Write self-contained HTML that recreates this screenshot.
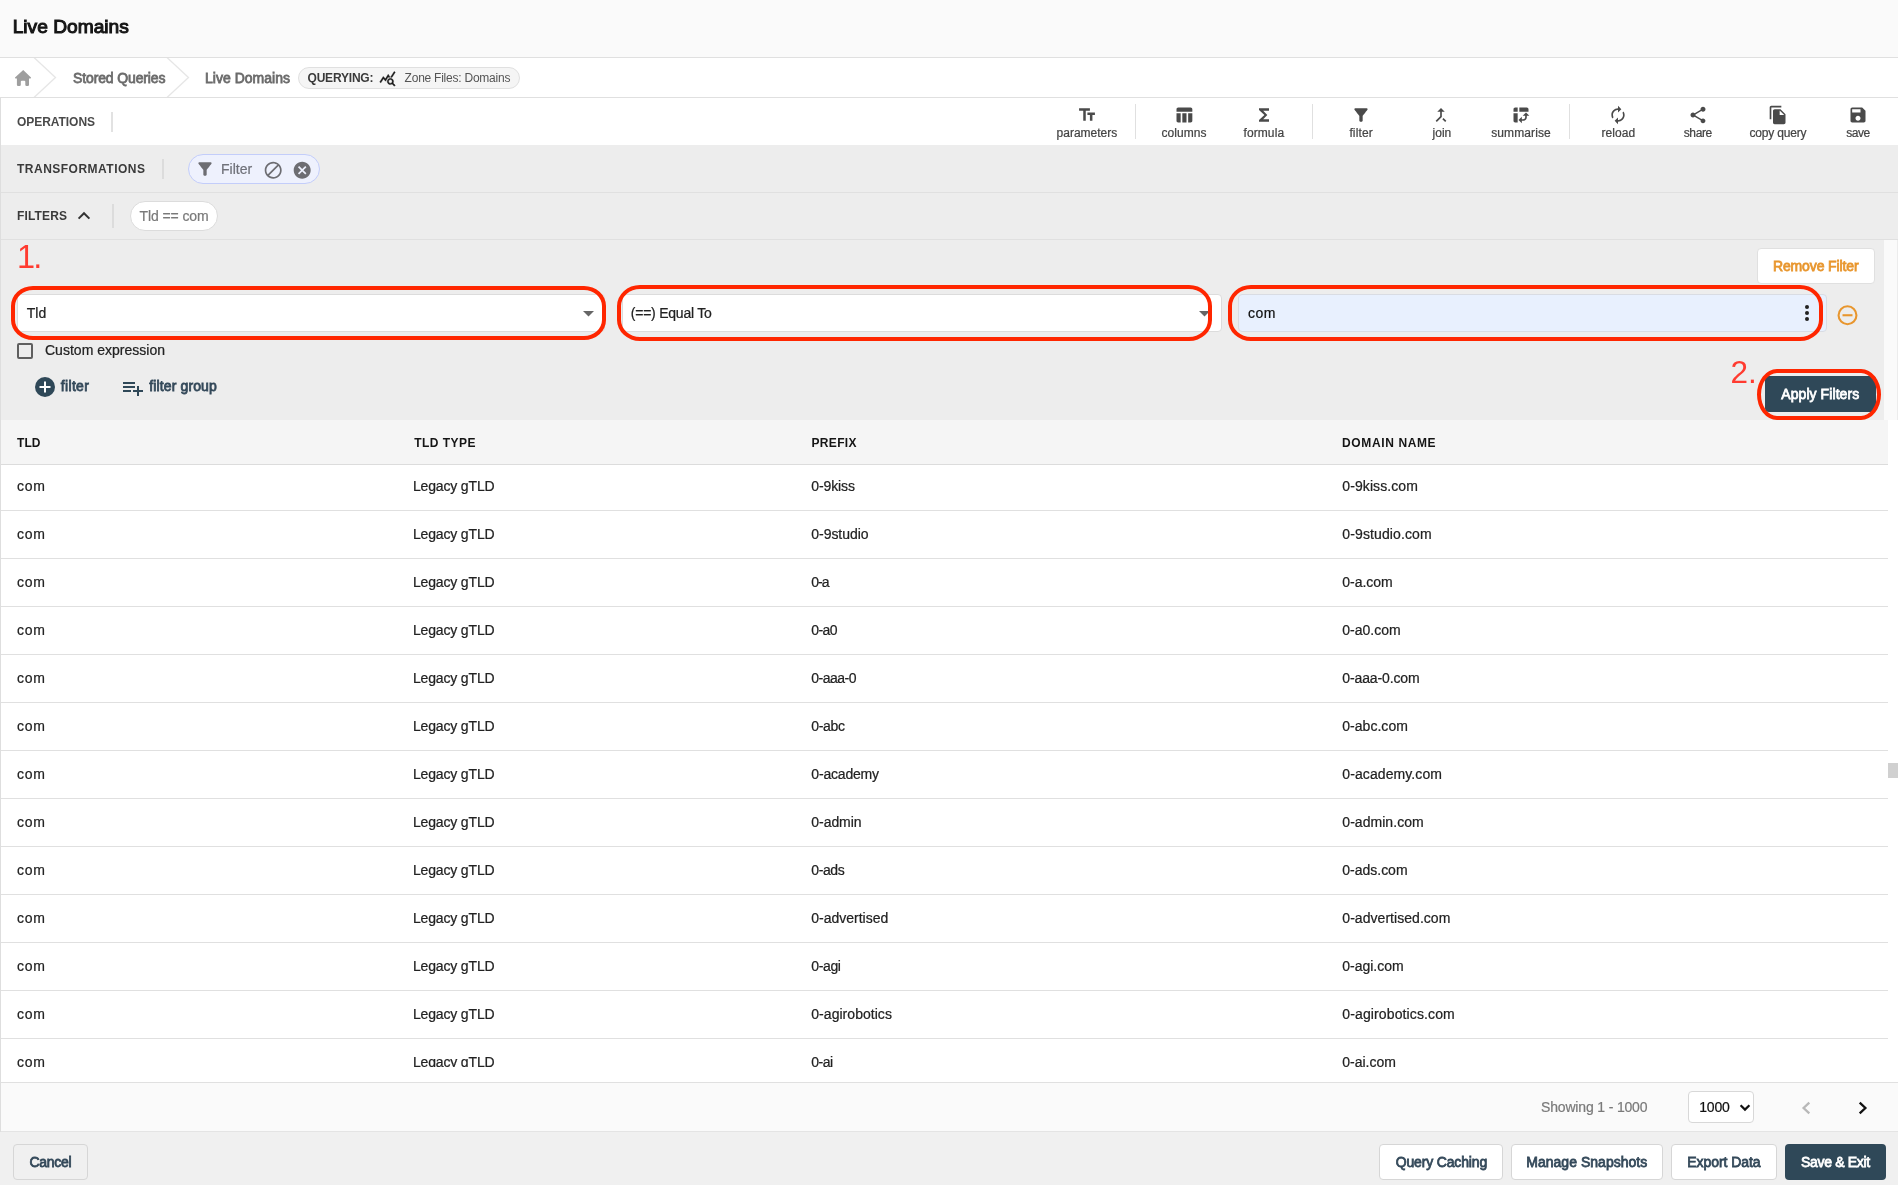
<!DOCTYPE html><html lang="en"><head><meta charset="utf-8"><title>Live Domains</title><style>
html,body{margin:0;padding:0;}body{width:1898px;height:1185px;position:relative;overflow:hidden;background:#fff;font-family:"Liberation Sans", sans-serif;}
.a{position:absolute;display:block;}.t{position:absolute;white-space:nowrap;line-height:20px;}
#tb{position:absolute;left:0;top:0;width:1898px;height:1067px;overflow:hidden;}
#w{position:absolute;left:0;top:0;width:1898px;height:1185px;will-change:transform;overflow:hidden;}
</style></head><body><div id="w">
<div class="a" style="left:0px;top:0px;width:1898px;height:57px;background:#fafafa;"></div>
<div class="a" style="left:0px;top:57px;width:1898px;height:1px;background:#e0e0e0;"></div>
<div class="a" style="left:0px;top:58px;width:1898px;height:39px;background:#fff;"></div>
<div class="a" style="left:0px;top:97px;width:1898px;height:1px;background:#e0e0e0;"></div>
<svg class="a" style="left:10px;top:66px" width="26" height="24" viewBox="10 66 26 24"><path d="M23.200 69.900L31 77.600Q31.200 78.600 30.200 78.600L29 78.600L29 84.800Q29 86 27.800 86L26.500 86Q25.300 86 25.300 84.800L25.300 81.800Q25.300 80.800 24.300 80.800L21.800 80.800Q20.800 80.800 20.800 81.800L20.800 84.800Q20.800 86 19.600 86L18.100 86Q16.900 86 16.900 84.800L16.900 78.600L15.800 78.600Q14.800 78.600 15 77.600Z" fill="#9e9e9e"/></svg>
<svg class="a" style="left:30px;top:58px" width="170" height="39" viewBox="0 0 170 39"><path d="M4 -0.5 L25.5 19.5 L4 39.5 M137 -0.5 L158.5 19.5 L137 39.5" fill="none" stroke="#e6e6e6" stroke-width="1.300"/></svg>
<div class="a" style="left:298px;top:67px;width:222px;height:22px;background:#f5f5f5;border:1px solid #e0e0e0;border-radius:11px;box-sizing:border-box;"></div>
<svg class="a" style="left:379.2px;top:69.7px" width="17" height="17" viewBox="0 0 24 24" stroke="#1a1a1a" stroke-width="0.5"><path d="M19.88 18.47c.44-.7.7-1.51.7-2.39 0-2.49-2.01-4.5-4.5-4.5s-4.5 2.01-4.5 4.5 2.01 4.5 4.49 4.5c.88 0 1.7-.26 2.39-.7L21.58 23 23 21.58l-3.120-3.110zm-3.800.110c-1.380 0-2.500-1.120-2.500-2.500s1.120-2.500 2.500-2.500 2.500 1.120 2.500 2.500-1.120 2.500-2.500 2.500zm-.360-8.500c-.740.020-1.450.180-2.100.450l-.550-.830-3.800 6.180-3.010-3.520-3.630 5.810L1 17l5-8 3 3.500L13 6l2.720 4.080zm2.590.500c-.640-.280-1.330-.450-2.050-.490L21.380 2 23 3.180l-4.690 7.400z" fill="#1a1a1a"/></svg>
<div class="a" style="left:0px;top:98px;width:1898px;height:47px;background:#fff;"></div>
<div class="a" style="left:111px;top:112px;width:2px;height:20px;background:#e2e2e2;"></div>
<svg class="a" style="left:1077px;top:105px" width="20" height="20" viewBox="0 0 24 24" ><path d="M2.5 4v3h5v12h3V7h5V4h-13zm19 5h-9v3h3v7h3v-7h3V9z" fill="#4a4a4a"/></svg>
<svg class="a" style="left:1174px;top:105px" width="20" height="20" viewBox="0 0 24 24" ><path d="M10 10.02h5V21h-5zM17 21h3c1.1 0 2-.9 2-2v-9h-5v11zm3-18H5c-1.1 0-2 .9-2 2v3h19V5c0-1.1-.9-2-2-2zM3 19c0 1.1.9 2 2 2h3V10H3v9z" fill="#4a4a4a"/></svg>
<svg class="a" style="left:1254px;top:105px" width="20" height="20" viewBox="0 0 24 24" ><path d="M18 4H6v2l6.5 6L6 18v2h12v-3h-7l5-5-5-5h7z" fill="#4a4a4a"/></svg>
<svg class="a" style="left:1351px;top:105px" width="20" height="20" viewBox="0 0 24 24" ><path d="M4.25 5.61C6.27 8.2 10 13 10 13v6c0 .55.45 1 1 1h2c.55 0 1-.45 1-1v-6s3.720-4.800 5.740-7.390c.510-.660.040-1.610-.790-1.610H5.040c-.830 0-1.300.950-.790 1.610z" fill="#4a4a4a"/></svg>
<svg class="a" style="left:1431px;top:105px" width="20" height="20" viewBox="0 0 24 24" ><path d="M17 20.41L18.41 19 15 15.59 13.59 17 17 20.41zM7.5 8H11v5.59L5.59 19 7 20.41l6-6V8h3.500L12 3.500 7.500 8z" fill="#4a4a4a"/></svg>
<svg class="a" style="left:1511px;top:105px" width="20" height="20" viewBox="0 0 24 24" ><path d="M10 8h11V5c0-1.100-.900-2-2-2h-9v5zM3 8h5V3H5c-1.100 0-2 .900-2 2v3zm2 13h3V10H3v9c0 1.100.900 2 2 2zm8 1l-4-4 4-4zm1-9l4-4 4 4zm.580 6H13v-2h1.580c1.330 0 2.420-1.080 2.420-2.420V13h2v1.580c0 2.440-1.980 4.420-4.420 4.420z" fill="#4a4a4a"/></svg>
<svg class="a" style="left:1608px;top:105px" width="20" height="20" viewBox="0 0 24 24" ><path d="M12 6v3l4-4-4-4v3c-4.420 0-8 3.580-8 8 0 1.570.460 3.030 1.240 4.260L6.700 14.800c-.450-.830-.700-1.790-.700-2.800 0-3.310 2.690-6 6-6zm6.760 1.740L17.300 9.200c.440.840.700 1.790.700 2.800 0 3.310-2.690 6-6 6v-3l-4 4 4 4v-3c4.420 0 8-3.580 8-8 0-1.570-.460-3.030-1.240-4.260z" fill="#4a4a4a"/></svg>
<svg class="a" style="left:1688px;top:105px" width="20" height="20" viewBox="0 0 24 24" ><path d="M18 16.080c-.760 0-1.440.300-1.960.770L8.910 12.700c.050-.230.090-.460.090-.700s-.040-.470-.090-.700l7.050-4.110c.540.500 1.250.810 2.040.810 1.660 0 3-1.340 3-3s-1.340-3-3-3-3 1.340-3 3c0 .240.040.470.090.700L8.040 9.810C7.500 9.310 6.790 9 6 9c-1.660 0-3 1.340-3 3s1.340 3 3 3c.790 0 1.500-.310 2.040-.810l7.120 4.160c-.050.210-.080.430-.080.650 0 1.610 1.310 2.920 2.920 2.920 1.610 0 2.920-1.310 2.920-2.920s-1.310-2.920-2.920-2.920z" fill="#4a4a4a"/></svg>
<svg class="a" style="left:1768px;top:105px" width="20" height="20" viewBox="0 0 24 24" ><path d="M16 1H4c-1.100 0-2 .900-2 2v14h2V3h12V1zm-1 4l6 6v10c0 1.100-.900 2-2 2H7.990C6.890 23 6 22.100 6 21l.010-14c0-1.100.890-2 1.990-2h7zm-1 7h5.500L14 6.500V12z" fill="#4a4a4a"/></svg>
<svg class="a" style="left:1848px;top:105px" width="20" height="20" viewBox="0 0 24 24" ><path d="M17 3H5c-1.110 0-2 .900-2 2v14c0 1.100.890 2 2 2h14c1.100 0 2-.900 2-2V7l-4-4zm-5 16c-1.660 0-3-1.340-3-3s1.340-3 3-3 3 1.340 3 3-1.340 3-3 3zm3-10H5V5h10v4z" fill="#4a4a4a"/></svg>
<div class="a" style="left:1135px;top:103.5px;width:1px;height:35px;background:#e0e0e0;"></div>
<div class="a" style="left:1312px;top:103.5px;width:1px;height:35px;background:#e0e0e0;"></div>
<div class="a" style="left:1569px;top:103.5px;width:1px;height:35px;background:#e0e0e0;"></div>
<div class="a" style="left:0px;top:145px;width:1898px;height:48px;background:#ededed;"></div>
<div class="a" style="left:0px;top:192px;width:1898px;height:1px;background:#e0e0e0;"></div>
<div class="a" style="left:162px;top:159px;width:2px;height:20px;background:#dcdcdc;"></div>
<div class="a" style="left:188px;top:154px;width:132px;height:30px;background:#eef1fd;border:1px solid #c3cdfa;border-radius:15px;box-sizing:border-box;"></div>
<svg class="a" style="left:194.6px;top:159.2px" width="20" height="20" viewBox="0 0 24 24" ><path d="M4.25 5.61C6.27 8.2 10 13 10 13v6c0 .55.45 1 1 1h2c.55 0 1-.45 1-1v-6s3.720-4.800 5.740-7.390c.510-.660.040-1.610-.790-1.610H5.040c-.830 0-1.300.950-.790 1.610z" fill="#6d6d72"/></svg>
<svg class="a" style="left:263.3px;top:159.8px" width="20.4" height="20.4" viewBox="0 0 24 24" ><path d="M12 2C6.480 2 2 6.480 2 12s4.480 10 10 10 10-4.480 10-10S17.520 2 12 2zM4 12c0-4.420 3.580-8 8-8 1.850 0 3.550.630 4.900 1.690L5.690 16.900C4.630 15.550 4 13.850 4 12zm8 8c-1.850 0-3.550-.630-4.900-1.690L18.310 7.100C19.370 8.450 20 10.150 20 12c0 4.420-3.580 8-8 8z" fill="#6d6d72"/></svg>
<svg class="a" style="left:292.3px;top:159.8px" width="20.4" height="20.4" viewBox="0 0 24 24" ><path d="M12 2C6.470 2 2 6.470 2 12s4.470 10 10 10 10-4.470 10-10S17.530 2 12 2zm5 13.590L15.590 17 12 13.410 8.410 17 7 15.590 10.590 12 7 8.410 8.410 7 12 10.590 15.590 7 17 8.410 13.410 12 17 15.590z" fill="#6d6d72"/></svg>
<div class="a" style="left:0px;top:193px;width:1898px;height:227px;background:#ededed;"></div>
<svg class="a" style="left:76px;top:208px" width="16" height="16" viewBox="0 0 16 16"><path d="M2.6 10.6 L8 5.2 L13.4 10.6" fill="none" stroke="#333" stroke-width="2"/></svg>
<div class="a" style="left:112px;top:204px;width:2px;height:24px;background:#dcdcdc;"></div>
<div class="a" style="left:130px;top:201px;width:88px;height:30px;background:#fff;border:1px solid #dcdcdc;border-radius:15px;box-sizing:border-box;"></div>
<div class="a" style="left:0px;top:239px;width:1898px;height:1px;background:#e0e0e0;"></div>
<div class="a" style="left:1884px;top:240px;width:14px;height:180px;background:#fafafa;"></div>
<div class="a" style="left:1897px;top:240px;width:1px;height:180px;background:#ececec;"></div>
<div class="a" style="left:17px;top:294px;width:588px;height:38px;background:#fff;border:1px solid #dcdcdc;border-radius:4px;box-sizing:border-box;"></div>
<svg class="a" style="left:582.5px;top:310.5px" width="11" height="6" viewBox="0 0 11 6"><path d="M0 0h11L5.500 5.500z" fill="#666"/></svg>
<div class="a" style="left:622px;top:294px;width:600px;height:38px;background:#fff;border:1px solid #dcdcdc;border-radius:4px;box-sizing:border-box;"></div>
<svg class="a" style="left:1199px;top:310.500px" width="11" height="6" viewBox="0 0 11 6"><path d="M0 0h11L5.500 5.500z" fill="#666"/></svg>
<div class="a" style="left:1238px;top:294px;width:589px;height:38px;background:#e8f0fe;border:1px solid #d9dce3;border-radius:4px;box-sizing:border-box;"></div>
<div class="a" style="left:1805.25px;top:304.9px;width:4px;height:4px;background:#222;border-radius:2px;"></div>
<div class="a" style="left:1805.25px;top:311px;width:4px;height:4px;background:#222;border-radius:2px;"></div>
<div class="a" style="left:1805.25px;top:317.1px;width:4px;height:4px;background:#222;border-radius:2px;"></div>
<svg class="a" style="left:1835.5px;top:303.7px" width="23" height="23" viewBox="0 0 23 23"><circle cx="11.500" cy="11.250" r="8.950" fill="none" stroke="#e8962e" stroke-width="2.100"/><path d="M6.500 11.250h10" stroke="#e8962e" stroke-width="2.100"/></svg>
<div class="a" style="left:1757px;top:248px;width:118px;height:36px;background:#fff;border:1px solid #e0e0e0;border-radius:4px;box-sizing:border-box;"></div>
<div class="a" style="left:17px;top:343px;width:16px;height:16px;border:2px solid #5f5f5f;border-radius:2px;box-sizing:border-box;"></div>
<svg class="a" style="left:35px;top:376.750px" width="20" height="20" viewBox="0 0 20 20"><circle cx="10" cy="10" r="10" fill="#2f4858"/><path d="M10 4.500v11M4.500 10h11" stroke="#fff" stroke-width="2"/></svg>
<svg class="a" style="left:121px;top:376px" width="24" height="24" viewBox="0 0 24 24" ><path d="M14 10H2v2h12v-2zm0-4H2v2h12V6zm4 8v-4h-2v4h-4v2h4v4h2v-4h4v-2h-4zM2 16h8v-2H2v2z" fill="#2f4858"/></svg>
<div class="a" style="left:1765px;top:376px;width:111px;height:36px;background:#2f4858;border-radius:4px;"></div>
<div class="a" style="left:10.9px;top:285.8px;width:595.1px;height:54.19999999999999px;border:4.2px solid #ff2600;border-radius:22px/20px;box-sizing:border-box;"></div>
<div class="a" style="left:617px;top:285px;width:595.25px;height:55.80000000000001px;border:4.2px solid #ff2600;border-radius:23px/21px;box-sizing:border-box;"></div>
<div class="a" style="left:1228px;top:285px;width:595.25px;height:56px;border:4.2px solid #ff2600;border-radius:23px/21px;box-sizing:border-box;"></div>
<div class="a" style="left:1757.1px;top:368.75px;width:124.10000000000014px;height:51.25px;border:4.2px solid #ff2600;border-radius:20px/25.6px;box-sizing:border-box;"></div>
<div class="a" style="left:0px;top:420px;width:1888px;height:44px;background:#f5f5f5;"></div>
<div class="a" style="left:1888px;top:420px;width:10px;height:662px;background:#fff;"></div>
<div class="a" style="left:0px;top:464px;width:1888px;height:1px;background:#dcdcdc;"></div>
<div class="a" style="left:0px;top:465px;width:1888px;height:617px;background:#fff;"></div>
<div class="a" style="left:0px;top:510px;width:1888px;height:1px;background:#e0e0e0;"></div>
<div class="a" style="left:0px;top:558px;width:1888px;height:1px;background:#e0e0e0;"></div>
<div class="a" style="left:0px;top:606px;width:1888px;height:1px;background:#e0e0e0;"></div>
<div class="a" style="left:0px;top:654px;width:1888px;height:1px;background:#e0e0e0;"></div>
<div class="a" style="left:0px;top:702px;width:1888px;height:1px;background:#e0e0e0;"></div>
<div class="a" style="left:0px;top:750px;width:1888px;height:1px;background:#e0e0e0;"></div>
<div class="a" style="left:0px;top:798px;width:1888px;height:1px;background:#e0e0e0;"></div>
<div class="a" style="left:0px;top:846px;width:1888px;height:1px;background:#e0e0e0;"></div>
<div class="a" style="left:0px;top:894px;width:1888px;height:1px;background:#e0e0e0;"></div>
<div class="a" style="left:0px;top:942px;width:1888px;height:1px;background:#e0e0e0;"></div>
<div class="a" style="left:0px;top:990px;width:1888px;height:1px;background:#e0e0e0;"></div>
<div class="a" style="left:0px;top:1038px;width:1888px;height:1px;background:#e0e0e0;"></div>
<div class="a" style="left:1888px;top:763px;width:10px;height:15px;background:#d0d0d0;"></div>
<div class="a" style="left:0px;top:1082px;width:1898px;height:50px;background:#fafafa;"></div>
<div class="a" style="left:0px;top:1082px;width:1898px;height:1px;background:#e0e0e0;"></div>
<div class="a" style="left:0px;top:1131px;width:1898px;height:1px;background:#e4e4e4;"></div>
<div class="a" style="left:1688px;top:1091px;width:66px;height:32px;background:#fff;border:1px solid #d8d8d8;border-radius:4px;box-sizing:border-box;"></div>
<svg class="a" style="left:1739px;top:1103px" width="12" height="10" viewBox="0 0 12 10"><path d="M1.600 2.200L6 6.600L10.400 2.200" fill="none" stroke="#111" stroke-width="2.200"/></svg>
<svg class="a" style="left:1800px;top:1100px" width="12" height="16" viewBox="0 0 12 16"><path d="M9.300 2.600L3.600 8L9.300 13.400" fill="none" stroke="#b8b8b8" stroke-width="2.300"/></svg>
<svg class="a" style="left:1856.500px;top:1100px" width="12" height="16" viewBox="0 0 12 16"><path d="M2.700 2.600L8.400 8L2.700 13.400" fill="none" stroke="#111" stroke-width="2.300"/></svg>
<div class="a" style="left:0px;top:1132px;width:1898px;height:53px;background:#f0f0f0;"></div>
<div class="a" style="left:13px;top:1144px;width:75px;height:36px;background:transparent;border:1px solid #d6d6d6;border-radius:4px;box-sizing:border-box;"></div>
<div class="a" style="left:1379px;top:1144px;width:124px;height:36px;background:#fff;border:1px solid #d6d6d6;border-radius:4px;box-sizing:border-box;"></div>
<div class="a" style="left:1511px;top:1144px;width:152px;height:36px;background:#fff;border:1px solid #d6d6d6;border-radius:4px;box-sizing:border-box;"></div>
<div class="a" style="left:1671px;top:1144px;width:106px;height:36px;background:#fff;border:1px solid #d6d6d6;border-radius:4px;box-sizing:border-box;"></div>
<div class="a" style="left:1785px;top:1144px;width:101px;height:36px;background:#2f4858;border-radius:4px;"></div>
<div class="a" style="left:0px;top:98px;width:1px;height:1034px;background:#dedede;"></div>
<div id="tb">
<span class="t" id="t34" style="left:17.00px;top:475.85px;font-size:14px;color:#222;-webkit-text-stroke:0.22px #222;letter-spacing:0.732px;">com</span>
<span class="t" id="t35" style="left:413.00px;top:475.85px;font-size:14px;color:#222;-webkit-text-stroke:0.22px #222;letter-spacing:-0.166px;">Legacy gTLD</span>
<span class="t" id="t36" style="left:811.30px;top:475.85px;font-size:14px;color:#222;-webkit-text-stroke:0.22px #222;letter-spacing:-0.107px;">0-9kiss</span>
<span class="t" id="t37" style="left:1342.30px;top:475.85px;font-size:14px;color:#222;-webkit-text-stroke:0.22px #222;letter-spacing:0.088px;">0-9kiss.com</span>
<span class="t" id="t38" style="left:17.00px;top:523.85px;font-size:14px;color:#222;-webkit-text-stroke:0.22px #222;letter-spacing:0.732px;">com</span>
<span class="t" id="t39" style="left:413.00px;top:523.85px;font-size:14px;color:#222;-webkit-text-stroke:0.22px #222;letter-spacing:-0.166px;">Legacy gTLD</span>
<span class="t" id="t40" style="left:811.30px;top:523.85px;font-size:14px;color:#222;-webkit-text-stroke:0.22px #222;letter-spacing:-0.045px;">0-9studio</span>
<span class="t" id="t41" style="left:1342.30px;top:523.85px;font-size:14px;color:#222;-webkit-text-stroke:0.22px #222;letter-spacing:0.115px;">0-9studio.com</span>
<span class="t" id="t42" style="left:17.00px;top:571.85px;font-size:14px;color:#222;-webkit-text-stroke:0.22px #222;letter-spacing:0.732px;">com</span>
<span class="t" id="t43" style="left:413.00px;top:571.85px;font-size:14px;color:#222;-webkit-text-stroke:0.22px #222;letter-spacing:-0.166px;">Legacy gTLD</span>
<span class="t" id="t44" style="left:811.30px;top:571.85px;font-size:14px;color:#222;-webkit-text-stroke:0.22px #222;letter-spacing:-0.999px;">0-a</span>
<span class="t" id="t45" style="left:1342.30px;top:571.85px;font-size:14px;color:#222;-webkit-text-stroke:0.22px #222;letter-spacing:-0.043px;">0-a.com</span>
<span class="t" id="t46" style="left:17.00px;top:619.85px;font-size:14px;color:#222;-webkit-text-stroke:0.22px #222;letter-spacing:0.732px;">com</span>
<span class="t" id="t47" style="left:413.00px;top:619.85px;font-size:14px;color:#222;-webkit-text-stroke:0.22px #222;letter-spacing:-0.166px;">Legacy gTLD</span>
<span class="t" id="t48" style="left:811.30px;top:619.85px;font-size:14px;color:#222;-webkit-text-stroke:0.22px #222;letter-spacing:-0.595px;">0-a0</span>
<span class="t" id="t49" style="left:1342.30px;top:619.85px;font-size:14px;color:#222;-webkit-text-stroke:0.22px #222;letter-spacing:-0.007px;">0-a0.com</span>
<span class="t" id="t50" style="left:17.00px;top:667.85px;font-size:14px;color:#222;-webkit-text-stroke:0.22px #222;letter-spacing:0.732px;">com</span>
<span class="t" id="t51" style="left:413.00px;top:667.85px;font-size:14px;color:#222;-webkit-text-stroke:0.22px #222;letter-spacing:-0.166px;">Legacy gTLD</span>
<span class="t" id="t52" style="left:811.30px;top:667.85px;font-size:14px;color:#222;-webkit-text-stroke:0.22px #222;letter-spacing:-0.503px;">0-aaa-0</span>
<span class="t" id="t53" style="left:1342.30px;top:667.85px;font-size:14px;color:#222;-webkit-text-stroke:0.22px #222;letter-spacing:-0.128px;">0-aaa-0.com</span>
<span class="t" id="t54" style="left:17.00px;top:715.85px;font-size:14px;color:#222;-webkit-text-stroke:0.22px #222;letter-spacing:0.732px;">com</span>
<span class="t" id="t55" style="left:413.00px;top:715.85px;font-size:14px;color:#222;-webkit-text-stroke:0.22px #222;letter-spacing:-0.166px;">Legacy gTLD</span>
<span class="t" id="t56" style="left:811.30px;top:715.85px;font-size:14px;color:#222;-webkit-text-stroke:0.22px #222;letter-spacing:-0.330px;">0-abc</span>
<span class="t" id="t57" style="left:1342.30px;top:715.85px;font-size:14px;color:#222;-webkit-text-stroke:0.22px #222;letter-spacing:0.025px;">0-abc.com</span>
<span class="t" id="t58" style="left:17.00px;top:763.85px;font-size:14px;color:#222;-webkit-text-stroke:0.22px #222;letter-spacing:0.732px;">com</span>
<span class="t" id="t59" style="left:413.00px;top:763.85px;font-size:14px;color:#222;-webkit-text-stroke:0.22px #222;letter-spacing:-0.166px;">Legacy gTLD</span>
<span class="t" id="t60" style="left:811.30px;top:763.85px;font-size:14px;color:#222;-webkit-text-stroke:0.22px #222;letter-spacing:-0.182px;">0-academy</span>
<span class="t" id="t61" style="left:1342.30px;top:763.85px;font-size:14px;color:#222;-webkit-text-stroke:0.22px #222;letter-spacing:0.092px;">0-academy.com</span>
<span class="t" id="t62" style="left:17.00px;top:811.85px;font-size:14px;color:#222;-webkit-text-stroke:0.22px #222;letter-spacing:0.732px;">com</span>
<span class="t" id="t63" style="left:413.00px;top:811.85px;font-size:14px;color:#222;-webkit-text-stroke:0.22px #222;letter-spacing:-0.166px;">Legacy gTLD</span>
<span class="t" id="t64" style="left:811.30px;top:811.85px;font-size:14px;color:#222;-webkit-text-stroke:0.22px #222;letter-spacing:-0.049px;">0-admin</span>
<span class="t" id="t65" style="left:1342.30px;top:811.85px;font-size:14px;color:#222;-webkit-text-stroke:0.22px #222;letter-spacing:0.045px;">0-admin.com</span>
<span class="t" id="t66" style="left:17.00px;top:859.85px;font-size:14px;color:#222;-webkit-text-stroke:0.22px #222;letter-spacing:0.732px;">com</span>
<span class="t" id="t67" style="left:413.00px;top:859.85px;font-size:14px;color:#222;-webkit-text-stroke:0.22px #222;letter-spacing:-0.166px;">Legacy gTLD</span>
<span class="t" id="t68" style="left:811.30px;top:859.85px;font-size:14px;color:#222;-webkit-text-stroke:0.22px #222;letter-spacing:-0.405px;">0-ads</span>
<span class="t" id="t69" style="left:1342.30px;top:859.85px;font-size:14px;color:#222;-webkit-text-stroke:0.22px #222;letter-spacing:-0.012px;">0-ads.com</span>
<span class="t" id="t70" style="left:17.00px;top:907.85px;font-size:14px;color:#222;-webkit-text-stroke:0.22px #222;letter-spacing:0.732px;">com</span>
<span class="t" id="t71" style="left:413.00px;top:907.85px;font-size:14px;color:#222;-webkit-text-stroke:0.22px #222;letter-spacing:-0.166px;">Legacy gTLD</span>
<span class="t" id="t72" style="left:811.30px;top:907.85px;font-size:14px;color:#222;-webkit-text-stroke:0.22px #222;letter-spacing:-0.005px;">0-advertised</span>
<span class="t" id="t73" style="left:1342.30px;top:907.85px;font-size:14px;color:#222;-webkit-text-stroke:0.22px #222;letter-spacing:0.046px;">0-advertised.com</span>
<span class="t" id="t74" style="left:17.00px;top:955.85px;font-size:14px;color:#222;-webkit-text-stroke:0.22px #222;letter-spacing:0.732px;">com</span>
<span class="t" id="t75" style="left:413.00px;top:955.85px;font-size:14px;color:#222;-webkit-text-stroke:0.22px #222;letter-spacing:-0.166px;">Legacy gTLD</span>
<span class="t" id="t76" style="left:811.30px;top:955.85px;font-size:14px;color:#222;-webkit-text-stroke:0.22px #222;letter-spacing:-0.380px;">0-agi</span>
<span class="t" id="t77" style="left:1342.30px;top:955.85px;font-size:14px;color:#222;-webkit-text-stroke:0.22px #222;letter-spacing:-0.013px;">0-agi.com</span>
<span class="t" id="t78" style="left:17.00px;top:1003.85px;font-size:14px;color:#222;-webkit-text-stroke:0.22px #222;letter-spacing:0.732px;">com</span>
<span class="t" id="t79" style="left:413.00px;top:1003.85px;font-size:14px;color:#222;-webkit-text-stroke:0.22px #222;letter-spacing:-0.166px;">Legacy gTLD</span>
<span class="t" id="t80" style="left:811.30px;top:1003.85px;font-size:14px;color:#222;-webkit-text-stroke:0.22px #222;letter-spacing:0.037px;">0-agirobotics</span>
<span class="t" id="t81" style="left:1342.30px;top:1003.85px;font-size:14px;color:#222;-webkit-text-stroke:0.22px #222;letter-spacing:0.123px;">0-agirobotics.com</span>
<span class="t" id="t82" style="left:17.00px;top:1051.85px;font-size:14px;color:#222;-webkit-text-stroke:0.22px #222;letter-spacing:0.732px;">com</span>
<span class="t" id="t83" style="left:413.00px;top:1051.85px;font-size:14px;color:#222;-webkit-text-stroke:0.22px #222;letter-spacing:-0.166px;">Legacy gTLD</span>
<span class="t" id="t84" style="left:811.30px;top:1051.85px;font-size:14px;color:#222;-webkit-text-stroke:0.22px #222;letter-spacing:-0.511px;">0-ai</span>
<span class="t" id="t85" style="left:1342.30px;top:1051.85px;font-size:14px;color:#222;-webkit-text-stroke:0.22px #222;letter-spacing:-0.017px;">0-ai.com</span>
</div>
<span class="t" id="t0" style="left:12.70px;top:17.35px;font-size:19.2px;color:#151515;-webkit-text-stroke:1.06px #151515;letter-spacing:-0.004px;">Live Domains</span>
<span class="t" id="t1" style="left:73.00px;top:68.15px;font-size:14px;color:#6b6b6b;-webkit-text-stroke:0.77px #6b6b6b;letter-spacing:-0.128px;">Stored Queries</span>
<span class="t" id="t2" style="left:205.00px;top:68.15px;font-size:14px;color:#6b6b6b;-webkit-text-stroke:0.77px #6b6b6b;letter-spacing:0.017px;">Live Domains</span>
<span class="t" id="t3" style="left:307.50px;top:67.59px;font-size:12px;color:#3a3a3a;font-weight:700;letter-spacing:-0.195px;">QUERYING:</span>
<span class="t" id="t4" style="left:404.60px;top:67.59px;font-size:12px;color:#555;letter-spacing:-0.236px;">Zone Files: Domains</span>
<span class="t" id="t5" style="left:17.00px;top:112.09px;font-size:12px;color:#4a4a4a;font-weight:700;letter-spacing:-0.050px;">OPERATIONS</span>
<span class="t" id="t6" style="left:1056.60px;top:122.84px;font-size:12px;color:#444;-webkit-text-stroke:0.22px #444;letter-spacing:-0.010px;">parameters</span>
<span class="t" id="t7" style="left:1161.50px;top:122.84px;font-size:12px;color:#444;-webkit-text-stroke:0.22px #444;letter-spacing:0.053px;">columns</span>
<span class="t" id="t8" style="left:1243.50px;top:122.84px;font-size:12px;color:#444;-webkit-text-stroke:0.22px #444;letter-spacing:0.093px;">formula</span>
<span class="t" id="t9" style="left:1349.40px;top:122.84px;font-size:12px;color:#444;-webkit-text-stroke:0.22px #444;letter-spacing:0.135px;">filter</span>
<span class="t" id="t10" style="left:1432.50px;top:122.84px;font-size:12px;color:#444;-webkit-text-stroke:0.22px #444;letter-spacing:0.031px;">join</span>
<span class="t" id="t11" style="left:1491.25px;top:122.84px;font-size:12px;color:#444;-webkit-text-stroke:0.22px #444;letter-spacing:0.094px;">summarise</span>
<span class="t" id="t12" style="left:1601.60px;top:122.84px;font-size:12px;color:#444;-webkit-text-stroke:0.22px #444;letter-spacing:0.023px;">reload</span>
<span class="t" id="t13" style="left:1683.75px;top:122.84px;font-size:12px;color:#444;-webkit-text-stroke:0.22px #444;letter-spacing:-0.398px;">share</span>
<span class="t" id="t14" style="left:1749.50px;top:122.84px;font-size:12px;color:#444;-webkit-text-stroke:0.22px #444;letter-spacing:-0.178px;">copy query</span>
<span class="t" id="t15" style="left:1846.25px;top:122.84px;font-size:12px;color:#444;-webkit-text-stroke:0.22px #444;letter-spacing:-0.508px;">save</span>
<span class="t" id="t16" style="left:17.00px;top:158.84px;font-size:12px;color:#3a3a3a;font-weight:700;letter-spacing:0.493px;">TRANSFORMATIONS</span>
<span class="t" id="t17" style="left:221.00px;top:159.15px;font-size:14px;color:#70727a;-webkit-text-stroke:0.22px #70727a;letter-spacing:0.010px;">Filter</span>
<span class="t" id="t18" style="left:17.00px;top:205.84px;font-size:12px;color:#3a3a3a;font-weight:700;letter-spacing:0.149px;">FILTERS</span>
<span class="t" id="t19" style="left:139.50px;top:206.15px;font-size:14px;color:#7a7a7a;-webkit-text-stroke:0.22px #7a7a7a;letter-spacing:-0.096px;">Tld == com</span>
<span class="t" id="t20" style="left:17.00px;top:246.94px;font-size:32.5px;color:#ff3b30;letter-spacing:-1.775px;">1.</span>
<span class="t" id="t21" style="left:26.75px;top:303.40px;font-size:14px;color:#222;-webkit-text-stroke:0.22px #222;letter-spacing:0.044px;">Tld</span>
<span class="t" id="t22" style="left:630.75px;top:303.40px;font-size:14px;color:#222;-webkit-text-stroke:0.22px #222;letter-spacing:-0.230px;">(==) Equal To</span>
<span class="t" id="t23" style="left:1248.00px;top:303.40px;font-size:14px;color:#111;-webkit-text-stroke:0.22px #111;letter-spacing:0.482px;">com</span>
<span class="t" id="t24" style="left:1772.90px;top:256.40px;font-size:14px;color:#e8962e;-webkit-text-stroke:0.77px #e8962e;letter-spacing:-0.114px;">Remove Filter</span>
<span class="t" id="t25" style="left:45.00px;top:340.15px;font-size:14px;color:#222;-webkit-text-stroke:0.22px #222;letter-spacing:0.013px;">Custom expression</span>
<span class="t" id="t26" style="left:60.75px;top:376.40px;font-size:14px;color:#34495a;-webkit-text-stroke:0.77px #34495a;letter-spacing:0.343px;">filter</span>
<span class="t" id="t27" style="left:149.25px;top:376.40px;font-size:14px;color:#34495a;-webkit-text-stroke:0.77px #34495a;letter-spacing:0.127px;">filter group</span>
<span class="t" id="t28" style="left:1730.40px;top:362.09px;font-size:31.5px;color:#ff3b30;letter-spacing:0.181px;">2.</span>
<span class="t" id="t29" style="left:1781.25px;top:384.15px;font-size:14px;color:#fff;-webkit-text-stroke:0.77px #fff;letter-spacing:0.077px;">Apply Filters</span>
<span class="t" id="t30" style="left:17.00px;top:433.04px;font-size:12px;color:#151515;font-weight:700;letter-spacing:0.045px;">TLD</span>
<span class="t" id="t31" style="left:414.20px;top:433.04px;font-size:12px;color:#151515;font-weight:700;letter-spacing:0.472px;">TLD TYPE</span>
<span class="t" id="t32" style="left:811.50px;top:433.04px;font-size:12px;color:#151515;font-weight:700;letter-spacing:0.332px;">PREFIX</span>
<span class="t" id="t33" style="left:1342.00px;top:433.04px;font-size:12px;color:#151515;font-weight:700;letter-spacing:0.628px;">DOMAIN NAME</span>
<span class="t" id="t86" style="left:1541.00px;top:1097.15px;font-size:14px;color:#7a7a7a;-webkit-text-stroke:0.22px #7a7a7a;letter-spacing:-0.162px;">Showing 1 - 1000</span>
<span class="t" id="t87" style="left:1699.20px;top:1097.15px;font-size:14px;color:#111;-webkit-text-stroke:0.22px #111;letter-spacing:-0.186px;">1000</span>
<span class="t" id="t88" style="left:29.40px;top:1152.15px;font-size:14px;color:#34495a;-webkit-text-stroke:0.77px #34495a;letter-spacing:-0.294px;">Cancel</span>
<span class="t" id="t89" style="left:1395.70px;top:1152.15px;font-size:14px;color:#34495a;-webkit-text-stroke:0.77px #34495a;letter-spacing:-0.158px;">Query Caching</span>
<span class="t" id="t90" style="left:1526.25px;top:1152.15px;font-size:14px;color:#34495a;-webkit-text-stroke:0.77px #34495a;letter-spacing:0.024px;">Manage Snapshots</span>
<span class="t" id="t91" style="left:1687.25px;top:1152.15px;font-size:14px;color:#34495a;-webkit-text-stroke:0.77px #34495a;letter-spacing:-0.064px;">Export Data</span>
<span class="t" id="t92" style="left:1801.00px;top:1152.15px;font-size:14px;color:#fff;-webkit-text-stroke:0.77px #fff;letter-spacing:-0.323px;">Save &amp; Exit</span>
</div></body></html>
